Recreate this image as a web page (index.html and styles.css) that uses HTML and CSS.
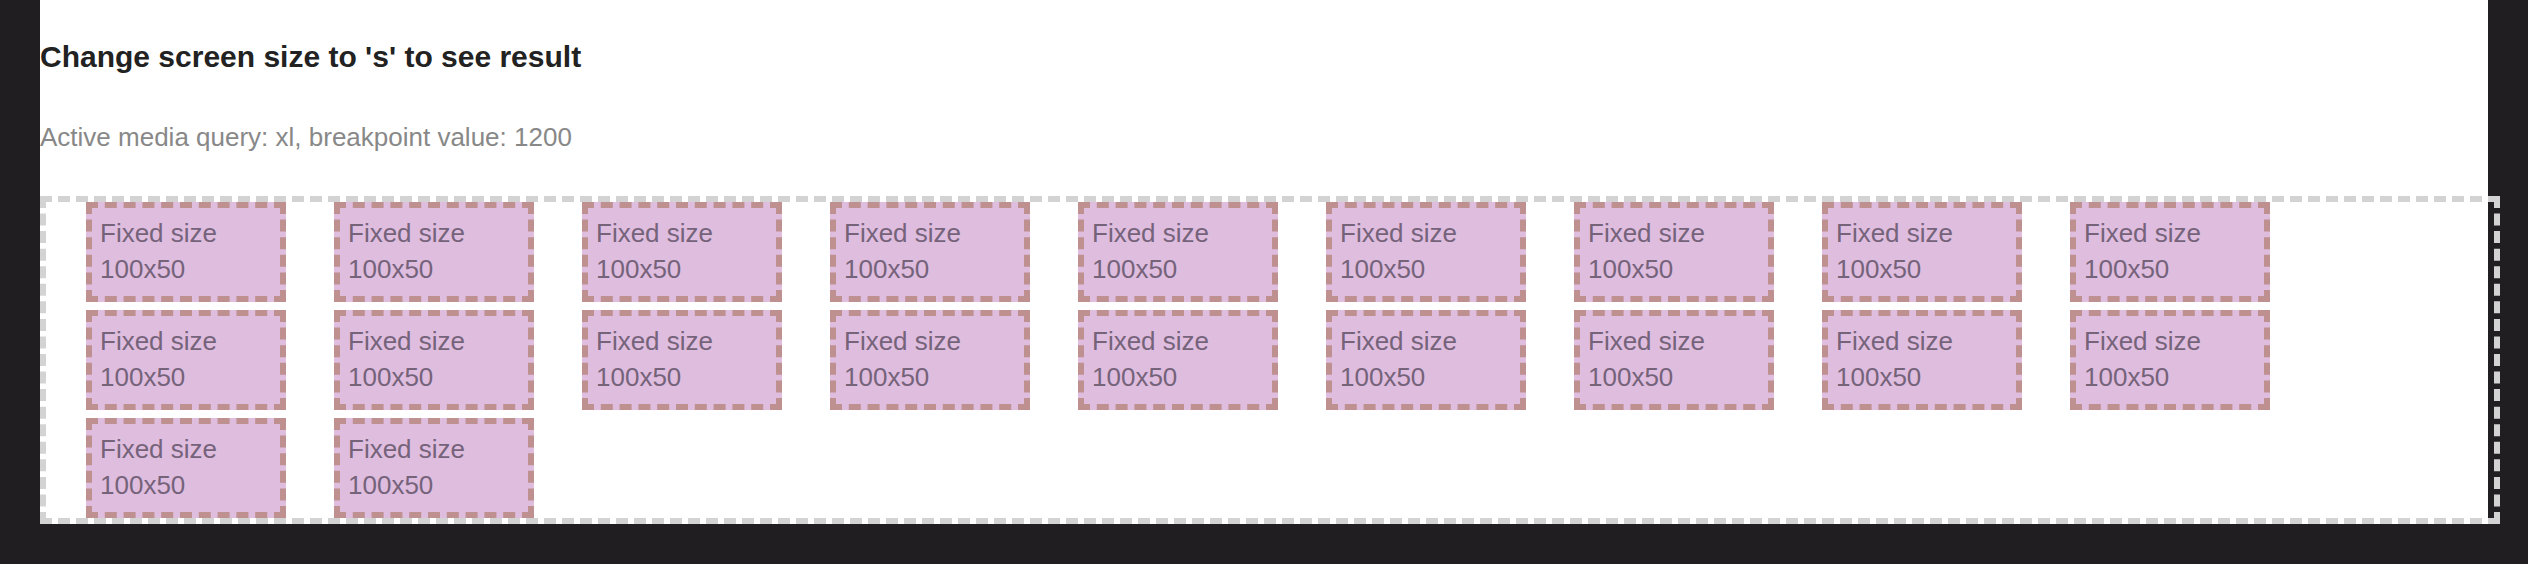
FILE: index.html
```html
<!DOCTYPE html>
<html>
<head>
<meta charset="utf-8">
<link rel="stylesheet" href="styles.css">
</head>
<body>
<div class="page">
  <h1 class="title">Change screen size to 's' to see result</h1>
  <p class="info">Active media query: xl, breakpoint value: 1200</p>
  <div class="grid">
    <div class="cell">Fixed size<br>100x50</div>
    <div class="cell">Fixed size<br>100x50</div>
    <div class="cell">Fixed size<br>100x50</div>
    <div class="cell">Fixed size<br>100x50</div>
    <div class="cell">Fixed size<br>100x50</div>
    <div class="cell">Fixed size<br>100x50</div>
    <div class="cell">Fixed size<br>100x50</div>
    <div class="cell">Fixed size<br>100x50</div>
    <div class="cell">Fixed size<br>100x50</div>
    <div class="cell">Fixed size<br>100x50</div>
    <div class="cell">Fixed size<br>100x50</div>
    <div class="cell">Fixed size<br>100x50</div>
    <div class="cell">Fixed size<br>100x50</div>
    <div class="cell">Fixed size<br>100x50</div>
    <div class="cell">Fixed size<br>100x50</div>
    <div class="cell">Fixed size<br>100x50</div>
    <div class="cell">Fixed size<br>100x50</div>
    <div class="cell">Fixed size<br>100x50</div>
    <div class="cell">Fixed size<br>100x50</div>
    <div class="cell">Fixed size<br>100x50</div>
  </div>
</div>
</body>
</html>
```
FILE: styles.css
```css
html, body {
  margin: 0;
  padding: 0;
  background: #211e22;
  height: 100%;
}
body {
  padding: 0 40px;
  font-family: "Liberation Sans", Arial, sans-serif;
}
.page {
  background: #ffffff;
  width: 2448px;
  padding-top: 40px;
}
.title {
  margin: 0;
  font-size: 30px;
  line-height: 34px;
  font-weight: bold;
  color: #222222;
}
.info {
  margin: 48px 0 44px;
  font-size: 26px;
  line-height: 30px;
  color: #888888;
}
.grid {
  width: 2408px;
  height: 316px;
  padding-left: 40px;
  border: 6px dashed #d3d3d3;
  display: grid;
  grid-template-columns: repeat(9, 200px);
  grid-auto-rows: 100px;
  column-gap: 48px;
  row-gap: 8px;
  align-content: start;
}
.cell {
  box-sizing: border-box;
  width: 200px;
  height: 100px;
  padding: 7px 8px;
  border: 6px dashed #bf9090;
  background: #dfbddf;
  color: #75637a;
  font-size: 26px;
  line-height: 36px;
}
```
